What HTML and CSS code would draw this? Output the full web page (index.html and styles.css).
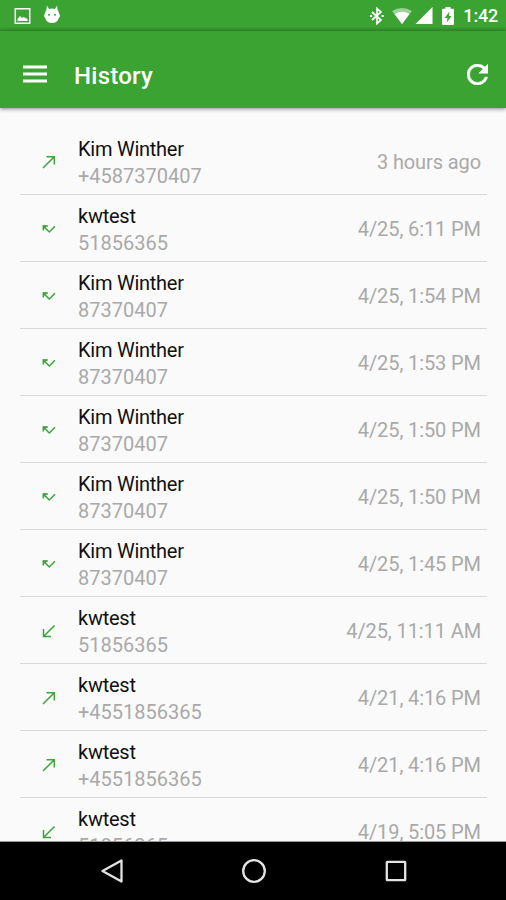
FILE: index.html
```html
<!DOCTYPE html>
<html lang="en">
<head>
<meta charset="utf-8">
<title>History</title>
<link rel="stylesheet" href="styles.css">
</head>
<body>
<svg class="defs" aria-hidden="true">
  <symbol id="out" viewBox="0 0 16 16"><path d="M2 14 13 3M5.500 2.700H13.300V10.500"/></symbol>
  <symbol id="in" viewBox="0 0 16 16"><path d="M13.500 2.500 2.500 13.500M2.500 6V13.500H10"/></symbol>
  <symbol id="missed" viewBox="0 0 16 16"><path d="M2.300 9.500V5H6.800M2.300 5 8.300 11 14 5.300"/><path class="tip" d="M2 4.500H6.500L2 9Z"/></symbol>
</svg>
<div class="screen">
  <header class="status">
    <svg class="picture" viewBox="0 0 16 16"><path fill="none" stroke="#fff" stroke-width="1.500" d="M.8.800H15.200V15.200H.8Z"/><path fill="#fff" d="M3 13V11L5.500 8 7.500 10 9 9 13 11V13Z"/></svg>
    <svg class="droid" viewBox="0 0 18 18"><path fill="#fff" d="M4 0 6 3.500Q9 2.600 12 3.500L14 0 14.700 5Q16 6 16 8Q18 10 15.600 13Q14 17.500 9 17.500Q4 17.500 2.400 13Q0 10 2 8Q2 6 3.300 5Z"/><circle cx="6" cy="9.200" r="1" fill="#3aa332"/><circle cx="12" cy="9.200" r="1" fill="#3aa332"/></svg>
    <svg class="bluetooth" viewBox="0 0 14 18"><path fill="none" stroke="#fff" stroke-width="1.700" d="M2 5 11 13 7 16.500V1.500L11 5 2 13"/><path fill="#fff" d="M0 8H2.200V10H0ZM11.500 8H13.700V10H11.500Z"/></svg>
    <svg class="wifi" viewBox="0 0 20 16"><path fill="#fff" opacity=".5" d="M0 3Q10-3 20 3L10 16Z"/><path fill="#fff" d="M2.600 6Q10 1.500 17.400 6L10 16Z"/></svg>
    <svg class="signal" viewBox="0 0 18 18"><path fill="#fff" d="M18 0V18H0Z"/></svg>
    <svg class="battery" viewBox="0 0 12 18"><path fill="#fff" d="M3.500 0H8.500V1.800H11Q12 1.800 12 2.800V17Q12 18 11 18H1Q0 18 0 17V2.800Q0 1.800 1 1.800H3.500Z"/><path fill="#3aa332" d="M7.500 4.500 2.700 11H5.500L4.800 15.500 9.500 9H6.800Z"/></svg>
    <span class="clock">1:42</span>
  </header>
  <div class="toolbar">
    <svg class="menu" viewBox="0 0 24 18"><path stroke="#fff" stroke-width="3" d="M0 2H24M0 9H24M0 16H24"/></svg>
    <h1>History</h1>
    <svg class="refresh" viewBox="4 4 16 16"><path fill="#fff" stroke="#fff" stroke-width=".4" d="M17.650 6.350A7.960 7.960 0 0 0 12 4a8 8 0 1 0 7.730 10h-2.080A6 6 0 1 1 12 6c1.660 0 3.140.690 4.220 1.780L13 11h7V4z"/></svg>
  </div>
  <main class="content">
  <ul class="list">
    <li><svg class="call"><use href="#out"/></svg><div class="who"><b>Kim Winther</b><span>+4587370407</span></div><time>3 hours ago</time></li>
    <li><svg class="call"><use href="#missed"/></svg><div class="who"><b>kwtest</b><span>51856365</span></div><time>4/25, 6:11 PM</time></li>
    <li><svg class="call"><use href="#missed"/></svg><div class="who"><b>Kim Winther</b><span>87370407</span></div><time>4/25, 1:54 PM</time></li>
    <li><svg class="call"><use href="#missed"/></svg><div class="who"><b>Kim Winther</b><span>87370407</span></div><time>4/25, 1:53 PM</time></li>
    <li><svg class="call"><use href="#missed"/></svg><div class="who"><b>Kim Winther</b><span>87370407</span></div><time>4/25, 1:50 PM</time></li>
    <li><svg class="call"><use href="#missed"/></svg><div class="who"><b>Kim Winther</b><span>87370407</span></div><time>4/25, 1:50 PM</time></li>
    <li><svg class="call"><use href="#missed"/></svg><div class="who"><b>Kim Winther</b><span>87370407</span></div><time>4/25, 1:45 PM</time></li>
    <li><svg class="call"><use href="#in"/></svg><div class="who"><b>kwtest</b><span>51856365</span></div><time>4/25, 11:11 AM</time></li>
    <li><svg class="call"><use href="#out"/></svg><div class="who"><b>kwtest</b><span>+4551856365</span></div><time>4/21, 4:16 PM</time></li>
    <li><svg class="call"><use href="#out"/></svg><div class="who"><b>kwtest</b><span>+4551856365</span></div><time>4/21, 4:16 PM</time></li>
    <li><svg class="call"><use href="#in"/></svg><div class="who"><b>kwtest</b><span>51856365</span></div><time>4/19, 5:05 PM</time></li>
  </ul>
  </main>
  <nav class="navbar">
    <svg viewBox="0 0 24 24"><path d="M21.500 1.500V22.500L2.500 12Z"/></svg>
    <svg viewBox="0 0 24 24"><circle cx="12" cy="12" r="10.800"/></svg>
    <svg viewBox="0 0 24 24"><rect x="2.800" y="2.800" width="18.400" height="18.400" rx=".5"/></svg>
  </nav>
</div>
</body>
</html>
```

FILE: styles.css
```css
* { box-sizing: border-box; }
body { margin: 0; background: #fafafa; font-family: Roboto, sans-serif; }
.defs { display: none; }
svg { display: block; flex: none; }
.screen { display: flex; flex-direction: column; width: 506px; height: 900px; overflow: hidden; }
.status {
  display: flex; align-items: center; flex: none;
  height: 31px; padding: 0 8px 0 14px;
  background: linear-gradient(#3aa332 27px, #35922e 30px); color: #fff;
}
.picture { width: 17px; height: 16px; }
.droid { width: 18px; height: 19px; margin-left: 12px; margin-top: -2px; }
.bluetooth { width: 14px; height: 18px; margin-left: auto; }
.wifi { width: 20px; height: 16px; margin-left: 8px; }
.signal { width: 18px; height: 17px; margin-left: 3px; }
.battery { width: 12px; height: 18px; margin-left: 9px; }
.clock { margin-left: 9px; font-size: 18px; font-weight: 500; line-height: 31px; letter-spacing: -.2px; }
.toolbar {
  display: flex; align-items: center; flex: none; position: relative;
  height: 77px; padding: 9px 18px 0 23px;
  background: #3aa332; box-shadow: 0 1px 4px rgba(0, 0, 0, .45);
}
.menu { width: 24px; height: 18px; }
h1 { margin: 3px auto 0 27px; color: #fff; font-size: 24px; font-weight: 500; line-height: 28px; letter-spacing: .25px; }
.refresh { width: 21px; height: 21px; }
.content { flex: 1; min-height: 0; overflow: hidden; padding: 20px 19px 0 20px; border-bottom: 1px solid #999; }
.list { margin: 0; padding: 0; list-style: none; }
li { display: flex; align-items: center; height: 67.050px; padding: 0 6px 0 21px; border-bottom: 1.500px solid #d9d9d9; }
.call { width: 16px; height: 16px; margin-top: 1px; fill: none; stroke: #3ba53b; stroke-width: 1.500; }
.tip { fill: #3ba53b; stroke: none; }
.who { display: flex; flex-direction: column; margin: 4px auto 0 21px; font-size: 20px; line-height: 27px; }
.who b { color: #111; font-weight: 400; letter-spacing: -.25px; }
.who span, time { color: #a9a9a9; }
time { margin-top: 3px; font-size: 20px; line-height: 27px; letter-spacing: -.1px; }
.navbar { display: flex; justify-content: center; align-items: center; gap: 118px; flex: none; height: 58px; padding-left: 1px; background: #000; }
.navbar svg { width: 24px; height: 24px; fill: none; stroke: #e3e3e3; stroke-width: 2.300; stroke-linejoin: round; }
```
